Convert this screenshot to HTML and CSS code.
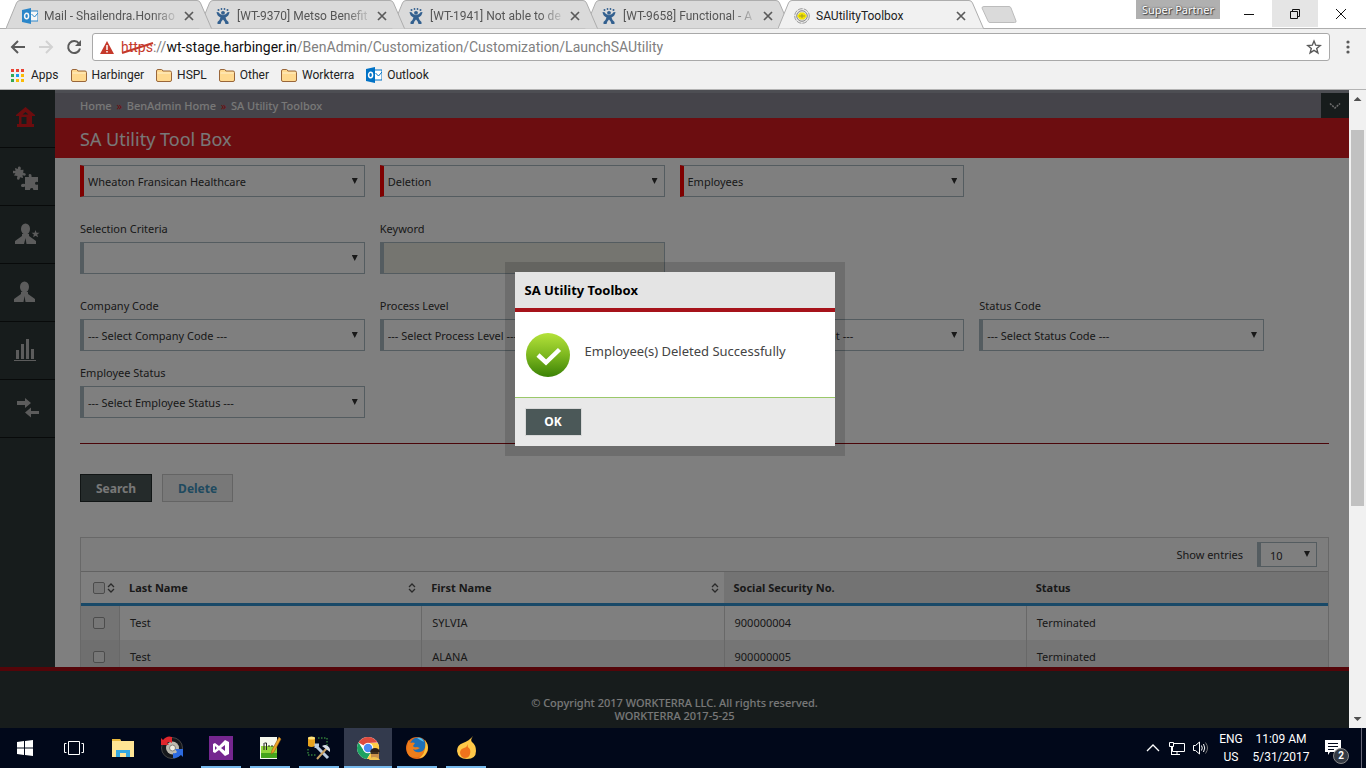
FILE: index.html
```html
<!DOCTYPE html>
<html lang="en">
<head>
<meta charset="utf-8">
<title>SAUtilityToolbox</title>
<link rel="stylesheet" href="styles.css">
</head>
<body>
<svg class="defs" aria-hidden="true">
  <defs>
    <symbol id="tab-shape" viewBox="0 0 207 29"><path d="M0 28.5 L10.5 3 Q11.500 .5 14 .5 H191 Q193.500 .5 194.500 3 L205.500 28.500"/></symbol>
    <symbol id="i-outlook" viewBox="0 0 16 16"><path d="M8 3h8v10H8z" fill="#fff" stroke="#0072c6"/><path d="M9.500 6l3 3 3.500-4" fill="none" stroke="#0072c6"/><path d="M0 2l9-2v16l-9-2z" fill="#0072c6"/><ellipse cx="4.600" cy="8" rx="2" ry="2.700" fill="none" stroke="#fff" stroke-width="1.500"/></symbol>
    <symbol id="i-jira" viewBox="0 0 16 16"><g fill="#33608f"><circle cx="3.500" cy="2" r="1"/><circle cx="6.500" cy="1" r=".9"/><circle cx="9.500" cy="1" r=".9"/><circle cx="12.500" cy="2" r="1"/><circle cx="8" cy="4.800" r="1.900"/><path d="M1.500 4l2 .2Q5 7 8 7.300 11 7 12.500 4.200l2-.2q-.5 4-4 5.500.5 2.500 3 4.500v2h-3Q10 13 8 11.500 6 13 5.500 16h-3v-2q2.500-2 3-4.500Q2 8 1.500 4z"/></g></symbol>
    <symbol id="i-close" viewBox="0 0 10 10"><path d="M1 1l8 8M9 1l-8 8" stroke="#5a5a5a" stroke-width="1.700" fill="none"/></symbol>
    <symbol id="i-folder" viewBox="0 0 16 13"><path d="M.5 11V2q0-1.500 1.500-1.500h3.500q1 0 1.300 1.500H14q1.500 0 1.500 1.500V11q0 1.500-1.500 1.500H2Q.5 12.500.5 11z" fill="#ffd98f" stroke="#99663a"/><path d="M1.500 4h13" stroke="#fff0cb"/></symbol>
    <symbol id="i-sort" viewBox="0 0 8 10"><path d="M1 4l3-3 3 3M1 6l3 3 3-3" fill="none" stroke="#555" stroke-width="1.300"/></symbol>
  </defs>
</svg>

<header class="browser">
  <div class="tabstrip">
    <div class="tab tab-a"><svg class="tab-bg"><use href="#tab-shape"/></svg><svg class="fav faded"><use href="#i-outlook"/></svg><span class="tab-title">Mail - Shailendra.Honrao</span><button class="tab-close" aria-label="Close tab"><svg><use href="#i-close"/></svg></button></div>
    <div class="tab tab-b"><svg class="tab-bg"><use href="#tab-shape"/></svg><svg class="fav"><use href="#i-jira"/></svg><span class="tab-title">[WT-9370] Metso Benefit</span><button class="tab-close" aria-label="Close tab"><svg><use href="#i-close"/></svg></button></div>
    <div class="tab tab-c"><svg class="tab-bg"><use href="#tab-shape"/></svg><svg class="fav"><use href="#i-jira"/></svg><span class="tab-title">[WT-1941] Not able to de</span><button class="tab-close" aria-label="Close tab"><svg><use href="#i-close"/></svg></button></div>
    <div class="tab tab-d"><svg class="tab-bg"><use href="#tab-shape"/></svg><svg class="fav"><use href="#i-jira"/></svg><span class="tab-title">[WT-9658] Functional - A</span><button class="tab-close" aria-label="Close tab"><svg><use href="#i-close"/></svg></button></div>
    <div class="tab active"><svg class="tab-bg"><use href="#tab-shape"/></svg>
      <svg class="fav" viewBox="0 0 16 16"><circle cx="8" cy="8" r="7.300" fill="#eee" stroke="#999" stroke-dasharray="5 1"/><circle cx="8" cy="8" r="5.300" fill="#ddd" stroke="#888"/><path d="M3 8l3-3.500h4L13 8l-3 3.500H6z" fill="#f4e600"/><path d="M5 8h6M8 6v4" stroke="#a59b20"/></svg>
      <span class="tab-title">SAUtilityToolbox</span><button class="tab-close" aria-label="Close tab"><svg><use href="#i-close"/></svg></button></div>
    <button class="new-tab" aria-label="New tab"><svg viewBox="0 0 36 18"><path d="M1 2q0-1.500 2-1.500h25q1.500 0 2 1.500l5 13q.5 1.500-1.500 1.500H9q-1.500 0-2-1.500z" fill="#dadada" stroke="#bcbcbc"/></svg></button>
    <span class="spacer"></span>
    <span class="partner">Super Partner</span>
    <button class="win" aria-label="Minimize"><svg viewBox="0 0 12 12"><path d="M1 6.500h10" /></svg></button>
    <button class="win hover" aria-label="Restore"><svg viewBox="0 0 12 12"><path d="M1.500 3.500h7v7h-7zM3.500 3.500v-2h7v7h-2"/></svg></button>
    <button class="win" aria-label="Close"><svg viewBox="0 0 12 12"><path d="M1 1l10 10M11 1L1 11"/></svg></button>
  </div>
  <div class="toolbar">
    <button class="nav" aria-label="Back"><svg viewBox="0 0 16 16"><path d="M15 8H2M8 2L2 8l6 6" fill="none" stroke="#5a5a5a" stroke-width="2"/></svg></button>
    <button class="nav" aria-label="Forward"><svg viewBox="0 0 16 16"><path d="M1 8h13M8 2l6 6-6 6" fill="none" stroke="#d2d2d2" stroke-width="2"/></svg></button>
    <button class="nav" aria-label="Reload"><svg viewBox="0 0 16 16"><path d="M13 4.500A6 6 0 1 0 14 9.500" fill="none" stroke="#5a5a5a" stroke-width="2"/><path d="M15 1v6H9z" fill="#5a5a5a"/></svg></button>
    <div class="address">
      <svg class="warn" viewBox="0 0 14 13"><path d="M7 0l7 13H0z" fill="#c5392b"/><path d="M7 4v5M7 10v1.500" stroke="#fff" stroke-width="1.500"/></svg>
      <div class="url" role="textbox" aria-label="Address"><span class="scheme">https<svg class="strike" viewBox="0 0 34 14"><path d="M1 12L32 2" stroke="#c5392b" stroke-width="2"/></svg></span>://<span class="host">wt-stage.harbinger.in</span>/BenAdmin/Customization/Customization/LaunchSAUtility</div>
      <svg class="star" viewBox="0 0 16 16"><path d="M8 2l1.700 4.200 4.500.3-3.500 2.900 1.200 4.500L8 11.400l-3.900 2.500 1.200-4.500L1.800 6.500l4.500-.3z" fill="none" stroke="#5a5a5a" stroke-width="1.400"/></svg>
    </div>
    <button class="menu" aria-label="Menu"><svg viewBox="0 0 4 14"><g fill="#5a5a5a"><circle cx="2" cy="2" r="1.600"/><circle cx="2" cy="7" r="1.600"/><circle cx="2" cy="12" r="1.600"/></g></svg></button>
  </div>
  <nav class="bookmarks">
    <a href="#"><svg class="apps" viewBox="0 0 13 13"><g fill="#ea4335"><path d="M0 0h3v3H0zM5 0h3v3H5zM10 0h3v3h-3z"/></g><path d="M0 5h3v3H0z" fill="#34a853"/><path d="M5 5h3v3H5z" fill="#1a9bf0"/><path d="M10 5h3v3h-3z" fill="#fbbc05"/><path d="M0 10h3v3H0z" fill="#34a853"/><path d="M5 10h3v3H5zM10 10h3v3h-3z" fill="#fbbc05"/></svg>Apps</a>
    <a href="#"><svg class="folder"><use href="#i-folder"/></svg>Harbinger</a>
    <a href="#"><svg class="folder"><use href="#i-folder"/></svg>HSPL</a>
    <a href="#"><svg class="folder"><use href="#i-folder"/></svg>Other</a>
    <a href="#"><svg class="folder"><use href="#i-folder"/></svg>Workterra</a>
    <a href="#"><svg class="fav"><use href="#i-outlook"/></svg>Outlook</a>
  </nav>
</header>

<div class="viewport">
  <div class="page">
    <div class="upper">
      <nav class="sidebar">
        <a href="#" aria-label="Home"><svg class="home" viewBox="0 0 24 24"><path d="M3 9L12.500 1l9.500 8v1h-3v8h2v3H4v-3h2v-8H3zM9.500 8.500h6l-3-2.500zM8.500 11v7h5v-7z" fill="#d8181d" fill-rule="evenodd"/></svg></a>
        <a href="#" aria-label="Modules"><svg viewBox="2 -3 28 28"><path d="M4 3l3 1q-.5-3 1.500-2.500T9.500 5l3-.3-.3 3.300q3 0 2.500 1.700T11.500 10l.5 3-3-.8q-.3 3-2 2.500T6.500 11L3 10.500 4.500 8Q1 9 1 7t3.500-1zM14 12h4q-1-3 1-3t1.500 3H27v5q-3-1-3 1.200t3 1.300V26h-5q1-3-1.300-3T19 26h-5v-4.500q-4 1.500-4-1t4-1.500z"/></svg></a>
        <a href="#" aria-label="New employee"><svg viewBox="0 0 28 28"><ellipse cx="12.500" cy="9" rx="4.500" ry="5.500"/><path d="M9 14h7v2l7 5v3h-9.500l-1-6-1.500 6H2v-3l7-5zM22.500 10l1 2.700 3 .1-2.300 1.700.9 2.800-2.600-1.600-2.400 1.600.8-2.800-2.300-1.700h3z"/></svg></a>
        <a href="#" aria-label="Employees"><svg viewBox="0 0 28 28"><ellipse cx="11.500" cy="9" rx="4.500" ry="5.500"/><path d="M8 14h7v2l7 5v3h-9.500l-1-6-1 6H1v-3l7-5z"/></svg></a>
        <a href="#" aria-label="Reports"><svg viewBox="0 0 28 28"><path d="M3 14h3v9H3zM8 8h3v15H8zM13 3h3v20h-3zM18 13h3v10h-3zM1 24h22v1H1z"/></svg></a>
        <a href="#" aria-label="Transfer"><svg viewBox="0 0 28 28"><path d="M4 7h8V4l6 5-6 5v-3H4zM26 17h-8v-3.500L12 18.500l6 5V20h8z"/></svg></a>
      </nav>
      <main class="content">
        <div class="crumbs">
          <a href="#">Home</a><i>»</i><a href="#">BenAdmin Home</a><i>»</i><a href="#">SA Utility Toolbox</a>
          <button class="expand" aria-label="Expand"><svg viewBox="0 0 12 8"><path d="M1 1.500l5 4.500 5-4.500" fill="none" stroke="#ddd" stroke-width="1.500" stroke-dasharray="2 1"/></svg></button>
        </div>
        <h1>SA Utility Tool Box</h1>
        <form class="body">
          <div class="fields">
            <div class="field"><span class="drop required"><select aria-label="Company"><option>Wheaton Fransican Healthcare</option></select></span></div>
            <div class="field"><span class="drop required"><select aria-label="Action"><option>Deletion</option></select></span></div>
            <div class="field"><span class="drop required"><select aria-label="Entity"><option>Employees</option></select></span></div>
          </div>
          <div class="fields">
            <div class="field"><label for="criteria">Selection Criteria</label><span class="drop"><select id="criteria"><option></option></select></span></div>
            <div class="field"><label for="keyword">Keyword</label><input id="keyword" type="text"></div>
          </div>
          <div class="fields">
            <div class="field"><label for="company">Company Code</label><span class="drop"><select id="company"><option>--- Select Company Code ---</option></select></span></div>
            <div class="field"><label for="process">Process Level</label><span class="drop"><select id="process"><option>--- Select Process Level ---</option></select></span></div>
            <div class="field"><label for="dept">Department</label><span class="drop"><select id="dept"><option>--- Select Process Department ---</option></select></span></div>
            <div class="field"><label for="status">Status Code</label><span class="drop"><select id="status"><option>--- Select Status Code ---</option></select></span></div>
            <div class="field"><label for="empstatus">Employee Status</label><span class="drop"><select id="empstatus"><option>--- Select Employee Status ---</option></select></span></div>
          </div>
          <hr>
          <div class="actions"><button type="button" class="search">Search</button><button type="button" class="delete">Delete</button></div>
          <div class="grid">
            <div class="grid-top"><label for="entries">Show entries</label><span class="drop small"><select id="entries"><option>10</option></select></span></div>
            <table>
              <thead><tr>
                <th class="pick"><span class="pick-in"><input type="checkbox" aria-label="Select all"><svg class="sort"><use href="#i-sort"/></svg></span></th>
                <th><span class="th-in">Last Name<svg class="sort"><use href="#i-sort"/></svg></span></th>
                <th><span class="th-in">First Name<svg class="sort"><use href="#i-sort"/></svg></span></th>
                <th class="shade">Social Security No.</th>
                <th class="shade">Status</th>
              </tr></thead>
              <tbody>
                <tr><td class="pick"><span class="pick-in"><input type="checkbox" aria-label="Select SYLVIA Test"></span></td><td>Test</td><td>SYLVIA</td><td>900000004</td><td>Terminated</td></tr>
                <tr><td class="pick"><span class="pick-in"><input type="checkbox" aria-label="Select ALANA Test"></span></td><td>Test</td><td>ALANA</td><td>900000005</td><td>Terminated</td></tr>
              </tbody>
            </table>
          </div>
        </form>
      </main>
    </div>
    <footer class="foot">© Copyright 2017 WORKTERRA LLC. All rights reserved.<br>WORKTERRA 2017-5-25</footer>
    <div class="overlay">
      <section class="dialog" role="dialog" aria-labelledby="dlg-title">
        <h2 id="dlg-title">SA Utility Toolbox</h2>
        <div class="dialog-body">
          <svg viewBox="0 0 46 46"><defs><linearGradient id="ok" x1="0" y1="0" x2="0" y2="1"><stop offset="0" stop-color="#b4e23a"/><stop offset=".5" stop-color="#7db81f"/><stop offset="1" stop-color="#3b8206"/></linearGradient></defs><circle cx="23" cy="23" r="22" fill="url(#ok)"/><path d="M13 23l8 7.500L34.500 17.500" fill="none" stroke="#fff" stroke-width="4.500"/></svg>
          <p>Employee(s) Deleted Successfully</p>
        </div>
        <div class="dialog-foot"><button type="button">OK</button></div>
      </section>
    </div>
  </div>
  <div class="scroll"><span class="up"></span><span class="thumb"></span><span class="down"></span></div>
</div>

<footer class="taskbar">
  <button aria-label="Start"><svg viewBox="0 0 24 24"><path d="M4 6l7-1v6.500H4zM12 5l8-1v7.500h-8zM4 12.500h7V19l-7-1zM12 12.500h8V20l-8-1z" fill="#fff"/></svg></button>
  <button aria-label="Task view"><svg viewBox="0 0 24 24"><path d="M6.500 5.500h11v13h-11zM4.500 7.500h-2v9h2M19.500 7.500h2v9h-2" fill="none" stroke="#fff"/></svg></button>
  <button aria-label="File Explorer"><svg viewBox="0 0 24 24"><path d="M1 3h8l1 2h13v16H1z" fill="#ffe594"/><path d="M1 3h8l1 2H1z" fill="#e8b83c"/><path d="M5 21v-7h14v7h-4v-4H9v4z" fill="#35a8e0"/></svg></button>
  <button aria-label="Tuning tool"><svg viewBox="0 0 24 24"><circle cx="12" cy="12" r="10.500" fill="#16181c" stroke="#444"/><circle cx="12.500" cy="12" r="6.500" fill="#bdb9ae"/><circle cx="12.500" cy="12" r="3" fill="#f0eee4" stroke="#85817a"/><path d="M1 9V2l2 2q4-5 9-3v6q-3-2-5 0l2 2z" fill="#e1262c"/><path d="M23 13v8l-2-2q-4 4-8 3v-5q3 1 4-1l-2-3z" fill="#2c6ae0"/></svg></button>
  <button class="run" aria-label="Visual Studio"><svg viewBox="0 0 24 24"><path d="M0 0h24v24H0z" fill="#75268f"/><path d="M4 8l2-1 4 3 6-6 4 2v12l-4 2-6-6-4 3-2-1zM6 10v4l2-2zM16 9l-4 3 4 3z" fill="#fff" fill-rule="evenodd"/></svg></button>
  <button class="run" aria-label="Text editor"><svg viewBox="0 0 24 24"><path d="M2 1h17v22H2z" fill="#f5f8ee"/><path d="M3 10h16v12H3z" fill="#91d63c"/><path d="M3 17h16v5H3z" fill="#45a51c"/><path d="M6 7v7M6.500 7h2v7M10 10h2m1 0h2" stroke="#222" fill="none"/><path d="M13 18l1-4L21 1l2 2-7 13z" fill="#eca428" stroke="#936015" stroke-width=".6"/></svg></button>
  <button class="run" aria-label="Database tool"><svg viewBox="0 0 24 24"><path d="M11 2h9v8M1 13v6h8" fill="none" stroke="#4bb548" stroke-dasharray="1.500 1.500"/><path d="M1 2h7v8q-3.500 2-7 0z" fill="#e9a31d"/><ellipse cx="4.500" cy="2" rx="3.500" ry="1.500" fill="#ffe27a"/><path d="M9 10l12 12M9 12v-3h3" stroke="#b9cbe0" stroke-width="3" fill="none"/><path d="M10 23l10-11" stroke="#c9a265" stroke-width="2"/><path d="M15 10q5-3 8 3v3l-4-3z" fill="#d5dde6"/></svg></button>
  <button class="run current" aria-label="Chrome"><svg viewBox="0 0 24 24"><circle cx="12" cy="12" r="11" fill="#fff"/><path d="M12 12L2.500 6.500A11 11 0 0 1 21.500 6.500L12 7z" fill="#dd4b3e"/><path d="M12 12L7.700 14.500 2.500 6.500A11 11 0 0 0 11 23l5-8.500z" fill="#1da261"/><path d="M12 7h9.800A11 11 0 0 1 11 23l5.300-8.500z" fill="#ffcd46"/><circle cx="12" cy="12" r="5.200" fill="#fff"/><circle cx="12" cy="12" r="4.200" fill="#4a8af4"/><path d="M15 17q0-4 4-4t4 4v6h-8z" fill="#c9914b"/><path d="M14 16q1-4 5-4t5 4z" fill="#2c2016"/><path d="M14.500 17h8" stroke="#111" stroke-width="1.500"/><path d="M13 24q1-3 5-3t6 3z" fill="#f0c34f"/></svg></button>
  <button class="run" aria-label="Firefox"><svg viewBox="0 0 24 24"><circle cx="12" cy="12" r="11" fill="#e66a16"/><circle cx="13" cy="9.500" r="8" fill="#1f70b8"/><path d="M12 2q5-1 7 4-4-2-7-4z" fill="#56c4ee"/><path d="M3 4l2 3q3-1 5 0L8 10q1 2 4 1l3 1q-4 3-7 1 2 4 7 3t6-8q3 11-8 13T2 14z" fill="#ee7d1b"/><path d="M20 4q6 8 0 15-2 3-6 3 8-5 6-18z" fill="#fcc63d"/></svg></button>
  <button class="run" aria-label="Flame app"><svg viewBox="0 0 24 24"><path d="M19 0q-3 4-1 6 4 3 4 9 0 8-9 8T3 15q0-6 6-8 6-2 10-7z" fill="#ffc848"/><path d="M14 8q-1 3 1 4 2 2 1 6-1 4-5 4t-5-5q0-4 4-5 3-1 4-4z" fill="#ef721c"/></svg></button>
  <span class="spacer"></span>
  <div class="tray">
    <svg viewBox="0 0 24 24" aria-label="Show hidden icons"><path d="M6 15l6-6 6 6" fill="none" stroke="#fff" stroke-width="1.300"/></svg>
    <svg viewBox="0 0 24 24" aria-label="Network"><path d="M8.500 7.500h11v8h-12V11M4.500 6.500h4v4h-4zM6.500 10v9M12 16v3M6 18.500h9" fill="none" stroke="#fff"/></svg>
    <svg viewBox="0 0 24 24" aria-label="Volume"><path d="M4.500 9.500h2l4-3.500v12l-4-3.500h-2zM12.500 9.500q1.500 2.500 0 5M14.500 8q2.500 4 0 8" fill="none" stroke="#fff"/><path d="M16.500 6.500q4 5.500 0 11" fill="none" stroke="#777"/></svg>
    <div class="lines lang">ENG<br>US</div>
    <div class="lines clock">11:09 AM<br>5/31/2017</div>
    <div class="notice"><svg viewBox="0 0 24 24"><path d="M4 4h16v12H9l-2 3v-3H4z" fill="#fff"/><path d="M7 7.500h10M7 10.500h10M7 13.500h6" stroke="#01081a"/></svg><b>2</b></div>
  </div>
</footer>
</body>
</html>
```

FILE: styles.css
```css
* { box-sizing: border-box; }

body {
  margin: 0;
  height: 100vh;
  display: flex;
  flex-direction: column;
  overflow: hidden;
  font: 11px/16px "Noto Sans", "Open Sans", sans-serif;
  color: #333;
}

button { border: 0; padding: 0; background: none; font: inherit; }
a { color: inherit; text-decoration: none; }
svg { display: block; flex: none; }
.defs { position: absolute; width: 0; height: 0; }
.spacer { flex: 1; }

/* Browser frame */
.browser {
  background: #f1f1f1;
  border-bottom: 1px solid #b4b4b4;
  font-family: Roboto, "Open Sans", sans-serif;
}
.tabstrip {
  display: flex;
  height: 29px;
  padding: 0 2px 0 6px;
  background: linear-gradient(#fff 28px, #adadad 28px);
}
.tab {
  position: relative;
  display: flex;
  align-items: center;
  width: 207px;
  height: 29px;
  margin-right: -14px;
  padding: 2px 19px 0 16px;
  font-size: 12px;
  color: #555;
}
.tab-a { z-index: 4; }
.tab-b { z-index: 3; }
.tab-c { z-index: 2; }
.tab-d { z-index: 1; }
.active { z-index: 5; color: #222; }
.tab-bg { position: absolute; inset: 0; z-index: -1; width: 207px; height: 29px; fill: #dadada; stroke: #adadad; }
.active .tab-bg { fill: #f1f1f1; }
.fav { width: 16px; height: 16px; }
.faded { opacity: .8; }
.tab-title {
  flex: 1;
  margin: 0 4px 0 6px;
  white-space: nowrap;
  -webkit-mask-image: linear-gradient(to right, #000 80%, transparent);
  mask-image: linear-gradient(to right, #000 80%, transparent);
}
.active .tab-title { -webkit-mask-image: none; mask-image: none; }
.tab-close svg { width: 10px; height: 10px; }
.new-tab { margin: 6px 0 0 10px; align-self: flex-start; }
.new-tab svg { width: 36px; height: 18px; }
.partner {
  align-self: flex-start;
  width: 84px;
  margin-right: 6px;
  background: #b0b0b0;
  color: #fff;
  text-align: center;
  font: 11px/19px "Noto Sans", sans-serif;
  text-shadow: 0 0 2px #333, 1px 1px 1px #444;
}
.win { width: 46px; height: 27px; display: flex; align-items: center; justify-content: center; }
.win svg { width: 12px; height: 12px; fill: none; stroke: #111; }
.hover { background: #e5e5e5; }

.toolbar { display: flex; align-items: center; padding: 4px 16px 0 10px; }
.nav { width: 28px; }
.nav svg { width: 16px; height: 16px; }
.address {
  flex: 1;
  display: flex;
  align-items: center;
  height: 28px;
  margin: 0 16px 0 -2px;
  padding: 0 7px;
  background: #fff;
  border: 1px solid #a9a9a9;
  border-radius: 3px;
}
.warn { width: 14px; height: 13px; }
.url { flex: 1; margin-left: 7px; font-size: 14px; line-height: 20px; color: #808080; white-space: nowrap; }
.scheme { position: relative; color: #c5392b; }
.strike { position: absolute; left: 0; top: 2px; width: 34px; height: 14px; }
.host { color: #111; }
.star { width: 16px; height: 16px; }
.menu svg { width: 4px; height: 14px; }

.bookmarks { display: flex; gap: 12px; height: 28px; padding: 0 11px; align-items: center; font-size: 12px; color: #222; }
.bookmarks a { display: flex; align-items: center; gap: 5px; }
.apps { width: 13px; height: 13px; margin-right: 2px; }
.folder { width: 16px; height: 13px; }

/* Page viewport */
.viewport { flex: 1; min-height: 0; display: flex; }
.page { position: relative; flex: 1; min-width: 0; display: flex; flex-direction: column; background: #fff; }
.upper { flex: 1; min-height: 0; display: flex; overflow: hidden; }

.sidebar { width: 55px; background: #2f3939; }
.sidebar a { display: flex; align-items: center; height: 58px; padding: 0 0 2px 13px; border-bottom: 1px solid #101515; }
.sidebar svg { width: 28px; height: 28px; fill: #b9b9b9; }
.sidebar .home { width: 24px; height: 24px; }

.content { flex: 1; min-width: 0; }
.crumbs {
  display: flex;
  align-items: center;
  height: 28px;
  padding-left: 25px;
  background: #8b8994;
  border-top: 3px solid #9a9da6;
  color: #f0f0f0;
  font-weight: 500;
}
.crumbs i { width: 15px; text-align: center; font-style: normal; font-weight: 400; color: #d8181d; }
.expand { margin-left: auto; width: 28px; height: 25px; background: #2f3939; display: flex; align-items: center; justify-content: center; }
.expand svg { width: 12px; height: 8px; }
h1 { margin: 0; padding: 0 25px; height: 40px; background: #d91a20; color: #f0f0f0; font-size: 18px; line-height: 42px; font-weight: 400; }

.body { padding: 7px 20px 0 25px; }
.fields { display: grid; grid-template-columns: repeat(4, 1fr); gap: 14px 15px; padding-right: 65px; margin-bottom: 24px; }
.field label { display: block; margin-bottom: 5px; }
.drop { position: relative; display: block; }
.drop::after {
  content: "";
  position: absolute;
  right: 7px;
  top: 13px;
  width: 6px;
  height: 6px;
  background: #333;
  clip-path: polygon(0 0, 100% 0, 50% 100%);
  pointer-events: none;
}
.drop select, .field input {
  display: block;
  width: 100%;
  height: 32px;
  padding: 2px 4px 0;
  appearance: none;
  border: 1px solid #a9b9c0;
  border-left: 4px solid #a9b9c0;
  border-radius: 0;
  background: #fff;
  color: #333;
  font: inherit;
}
.field input { background: #ebebe0; }
.drop.required select { border-left-color: #f00; }
hr { height: 1px; margin: 25px 0 30px; border: 0; background: #960a12; }

.actions { display: flex; gap: 10px; margin-bottom: 35px; }
.actions button { height: 28px; padding: 1px 15px 0; border: 1px solid #c8c8c8; font-size: 12px; font-weight: 700; }
.actions .search { background: #4a5656; border-color: #222b2b; color: #f0f0f0; }
.actions .delete { background: #f0f0f0; color: #3f94bf; }

.grid { border: 1px solid #d0d0d0; }
.grid-top { display: flex; align-items: center; justify-content: flex-end; gap: 14px; height: 33px; padding-right: 11px; background: #fafafa; }
.small { width: 60px; }
.drop.small select { height: 25px; padding-left: 9px; }
.small::after { top: 9px; }
table { width: 100%; border-collapse: separate; border-spacing: 0; table-layout: fixed; }
th { height: 35px; padding: 0 10px; border-top: 1px solid #c4c4c4; border-bottom: 3px solid #3292d0; text-align: left; font-weight: 700; }
td { height: 34px; padding: 0 10px; border-left: 1px solid #d0d0d0; }
td.pick { border-left: 0; background: #e8e8e8; }
.pick { width: 38px; padding: 0 4px 0 12px; }
.pick-in, .th-in { display: flex; align-items: center; gap: 2px; }
.th-in { justify-content: space-between; }
.th-in .sort { margin-right: -5px; }
.shade { background: #e6e6e6; }
tbody tr:nth-child(2) { background: #ebebeb; }
tbody tr:nth-child(2) .pick { background: #dedede; }
.sort { width: 8px; height: 10px; }
input[type="checkbox"] { appearance: none; flex: none; width: 12px; height: 12px; margin: 0; border: 1px solid #999; border-radius: 2px; background: #eee; }

.foot { height: 61px; padding-top: 25px; border-top: 4px solid #a80a12; background: #2f3939; color: #f0f0f0; font-weight: 500; text-align: center; line-height: 13px; }

/* Modal */
.overlay { position: absolute; inset: 0; display: flex; justify-content: center; align-items: flex-start; padding-top: 172px; background: rgba(0, 0, 0, .5); }
.dialog { width: 340px; border: 10px solid rgba(0, 0, 0, .14); background: #fff; background-clip: padding-box; }
.dialog h2 { margin: 0; padding: 0 10px; background: #e4e4e4; border-bottom: 4px solid #a6131a; color: #000; font-size: 13px; line-height: 36px; }
.dialog-body { display: flex; align-items: center; gap: 14px; height: 85px; padding: 0 10px; }
.dialog-body svg { width: 46px; height: 46px; }
.dialog-body p { margin: 0 0 8px; font-size: 13px; line-height: 20px; color: #444; }
.dialog-foot { height: 49px; padding: 10px; background: #e9e9e9; border-top: 1px solid #9bc86a; }
.dialog-foot button { width: 57px; height: 28px; background: #4b5858; border: 1px solid #d8d8d8; color: #fff; font-size: 12px; font-weight: 700; }

.scroll { width: 17px; display: flex; flex-direction: column; align-items: center; background: #f1f1f1; }
.scroll .thumb { flex: none; width: 13px; height: 59%; margin: 29px 0 auto; background: #c1c1c1; }
.up, .down { width: 8px; height: 4px; background: #505050; }
.up { margin-top: 7px; clip-path: polygon(50% 0, 100% 100%, 0 100%); }
.down { margin-bottom: 7px; clip-path: polygon(0 0, 100% 0, 50% 100%); }

/* Taskbar */
.taskbar { display: flex; gap: 1px; height: 40px; padding-left: 1px; background: #01081a; color: #fff; font-family: Roboto, "Open Sans", sans-serif; }
.taskbar button { display: flex; align-items: center; justify-content: center; width: 48px; }
.taskbar svg { width: 24px; height: 24px; }
.run { background: linear-gradient(#76b9ed, #76b9ed) center bottom / 40px 2px no-repeat; }
.taskbar .current { background: linear-gradient(#333a4d 38px, #76b9ed 38px); }
.tray { display: flex; align-items: center; margin-right: 4px; padding-right: 16px; border-right: 1px solid #667; }
.lines { font-size: 12px; line-height: 18px; text-align: center; }
.lang { width: 36px; }
.clock { width: 64px; }
.notice { position: relative; margin-left: 8px; }
.notice b { position: absolute; left: 12px; top: 12px; width: 16px; height: 16px; border: 1px solid #888; border-radius: 50%; background: #333a44; font-size: 10px; line-height: 14px; text-align: center; }
```
